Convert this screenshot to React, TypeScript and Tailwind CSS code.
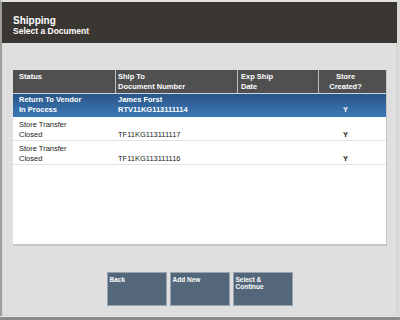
const rows = [
  { status: ["Return To Vendor", "In Process"], shipTo: ["James Forst", "RTV11KG113111114"], date: ["", ""], created: "Y", selected: true },
  { status: ["Store Transfer", "Closed"], shipTo: ["", "TF11KG113111117"], date: ["", ""], created: "Y", selected: false },
  { status: ["Store Transfer", "Closed"], shipTo: ["", "TF11KG113111116"], date: ["", ""], created: "Y", selected: false },
];

const Lines = ({ lines }: { lines: string[] }) => (
  <>
    {lines.map((l, i) => (
      <div key={i} className="h-[10px] whitespace-nowrap">
        {l}
      </div>
    ))}
  </>
);

const App = () => {
  return (
    <div className="w-[400px] h-[320px] flex flex-col bg-[#dfdfdf] font-['Liberation_Sans',Arial,sans-serif] overflow-hidden">
      <div className="flex-1 flex flex-col border-l-2 border-l-[#9e9e9e] border-t-2 border-t-[#e2e2e2] border-r-[3px] border-r-[#dadada]">
        <header className="h-[41px] bg-[#3a3733] px-[11px] pt-[14px] text-white font-bold">
          <div className="text-[10px] leading-[10px]">Shipping</div>
          <div className="text-[8.5px] leading-[10px]">Select a Document</div>
        </header>

        <main className="flex-1 flex flex-col border-l border-r border-b border-[#ddd2c6] pt-[27px]">
          <div className="ml-[10px] w-[374px] h-[176px] bg-white border-r border-b-2 border-[#c6c6c6] flex flex-col">
            <div className="flex h-[24px] bg-[#505050] text-white font-bold text-[7.5px] leading-[10px] border-b border-[#c9d6e6]">
              <div className="w-[103px] pl-[6px] pt-[2px] border-r border-[#bdbdbd]">
                <Lines lines={["Status"]} />
              </div>
              <div className="w-[122px] pl-[2px] pt-[2px] border-r border-[#bdbdbd]">
                <Lines lines={["Ship To", "Document Number"]} />
              </div>
              <div className="w-[81px] pl-[3px] pt-[2px] border-r border-[#bdbdbd]">
                <Lines lines={["Exp Ship", "Date"]} />
              </div>
              <div className="flex-1 pr-[14px] pt-[2px] text-center">
                <Lines lines={["Store", "Created?"]} />
              </div>
            </div>

            {rows.map((r, i) => (
              <div
                key={i}
                className={
                  r.selected
                    ? "flex h-[23px] bg-gradient-to-b from-[#2a5687] to-[#3b78b8] text-white font-bold text-[7.5px] leading-[10px] pt-[1px]"
                    : "flex h-[24px] text-[#222] text-[7.5px] leading-[10px] border-b border-[#e2e2e2] pt-[3px]"
                }
              >
                <div className="w-[103px] pl-[6px]">
                  <Lines lines={r.status} />
                </div>
                <div className="w-[122px] pl-[2px]">
                  <Lines lines={r.shipTo} />
                </div>
                <div className="w-[81px] pl-[3px]">
                  <Lines lines={r.date} />
                </div>
                <div className="flex-1 pr-[14px] text-center font-bold">
                  <Lines lines={["", r.created]} />
                </div>
              </div>
            ))}
          </div>

          <div className="flex justify-center gap-[3px] mt-[26px]">
            {[["Back"], ["Add New"], ["Select &", "Continue"]].map((label, i) => (
              <button
                key={i}
                className="w-[60px] h-[34px] bg-[#546679] border border-[#9aa4ae] text-white font-bold text-[6.5px] leading-[7px] text-left px-[2px] pt-[3px] flex flex-col items-start justify-start"
              >
                {label.map((l) => (
                  <span key={l} className="whitespace-nowrap">
                    {l}
                  </span>
                ))}
              </button>
            ))}
          </div>
        </main>
      </div>
      <div className="h-[4px] bg-[#8a8a8a] border-t border-[#e8e8e8]" />
    </div>
  );
};

export default App;
